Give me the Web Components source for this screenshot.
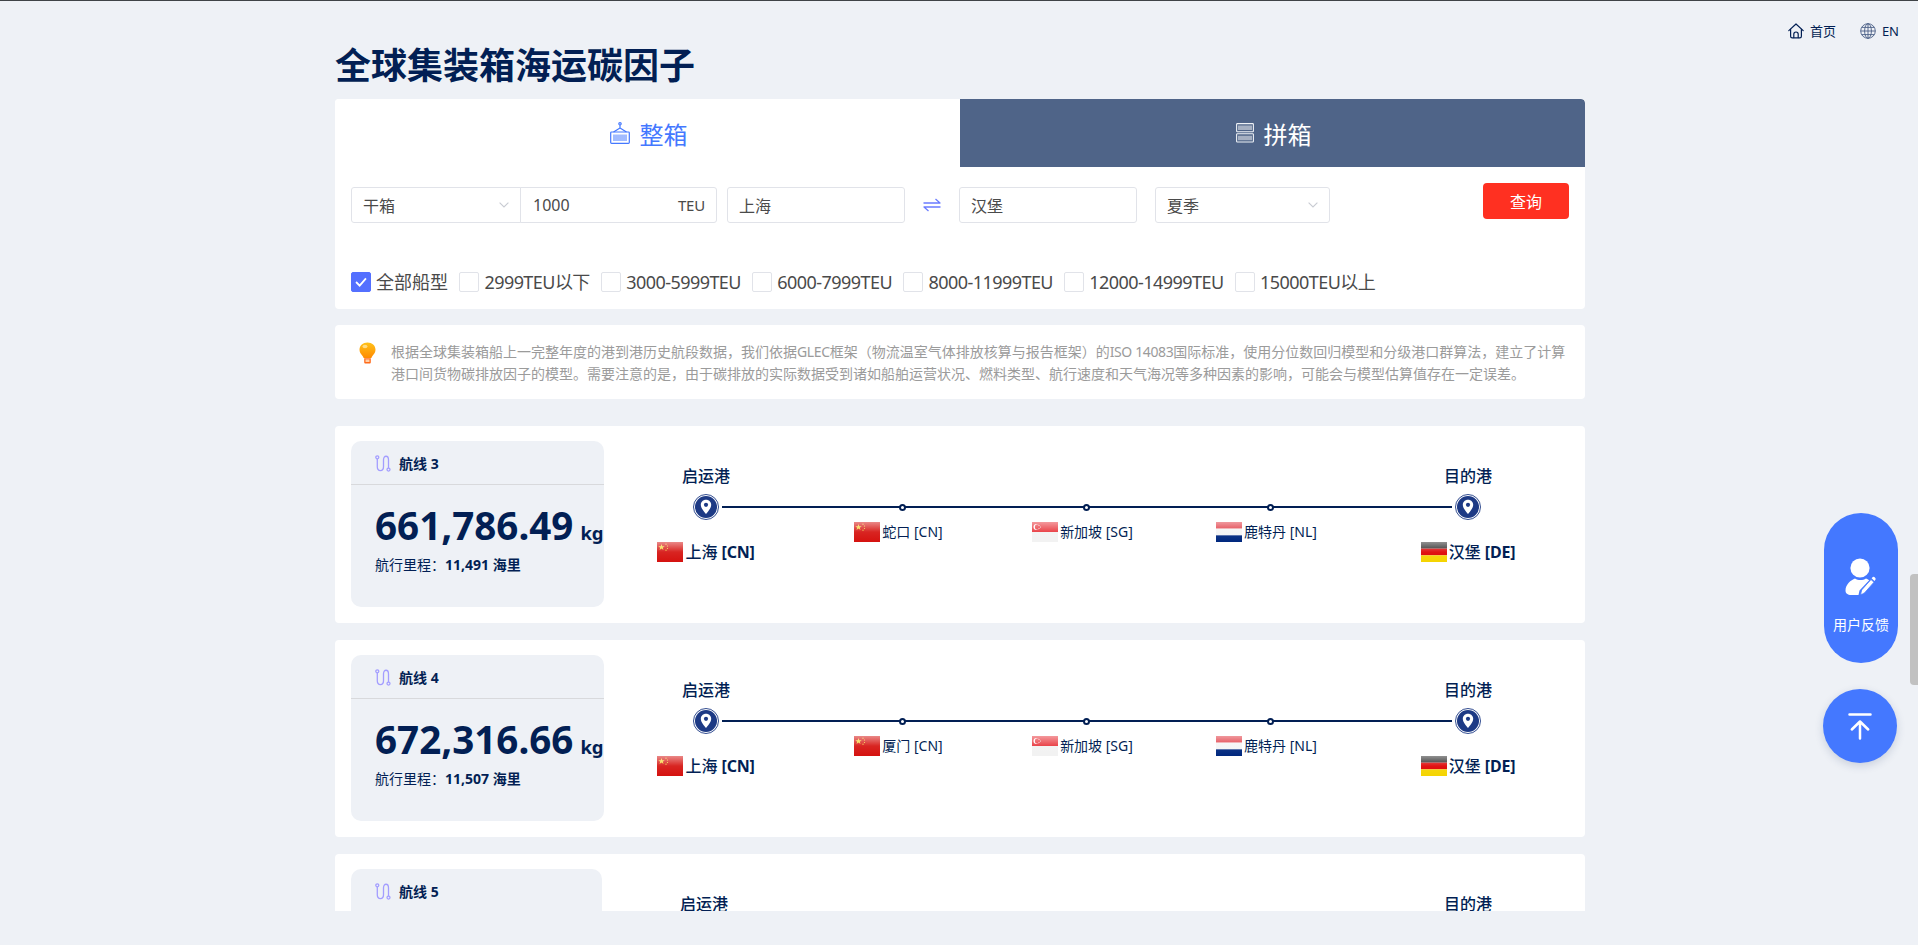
<!DOCTYPE html>
<html lang="zh">
<head>
<meta charset="utf-8">
<title>全球集装箱海运碳因子</title>
<style>
  html, body { margin: 0; height: 100%; }
  body {
    background: #eef1f6;
    color: #021f54;
    font-family: "Noto Sans", "Noto Sans CJK SC", sans-serif;
    overflow: hidden;
  }
  .latin { letter-spacing: -.38px; }
</style>
</head>
<body>
<carbon-page>
  <site-nav slot="nav"></site-nav>
  <page-heading>全球集装箱海运碳因子</page-heading>
  <search-panel></search-panel>
  <info-note>根据全球集装箱船上一完整年度的港到港历史航段数据，我们依据<span class="latin">GLEC</span>框架（物流温室气体排放核算与报告框架）的<span class="latin">ISO 14083</span>国际标准，使用分位数回归模型和分级港口群算法，建立了计算<br>港口间货物碳排放因子的模型。需要注意的是，由于碳排放的实际数据受到诸如船舶运营状况、燃料类型、航行速度和天气海况等多种因素的影响，可能会与模型估算值存在一定误差。</info-note>
  <route-card no="3" weight="661,786.49" distance="11,491">
    <route-port slot="origin" size="main" flag="cn" name="上海" code="CN"></route-port>
    <route-port slot="via" flag="cn" name="蛇口" code="CN"></route-port>
    <route-port slot="via" flag="sg" name="新加坡" code="SG"></route-port>
    <route-port slot="via" flag="nl" name="鹿特丹" code="NL"></route-port>
    <route-port slot="dest" size="main" flag="de" name="汉堡" code="DE"></route-port>
  </route-card>
  <route-card no="4" weight="672,316.66" distance="11,507">
    <route-port slot="origin" size="main" flag="cn" name="上海" code="CN"></route-port>
    <route-port slot="via" flag="cn" name="厦门" code="CN"></route-port>
    <route-port slot="via" flag="sg" name="新加坡" code="SG"></route-port>
    <route-port slot="via" flag="nl" name="鹿特丹" code="NL"></route-port>
    <route-port slot="dest" size="main" flag="de" name="汉堡" code="DE"></route-port>
  </route-card>
  <route-card no="5" narrow>
    <route-port slot="origin" size="main" flag="cn" name="上海" code="CN"></route-port>
    <route-port slot="dest" size="main" flag="de" name="汉堡" code="DE"></route-port>
  </route-card>
  <float-actions slot="float"></float-actions>
</carbon-page>

<script>
const NAVY = '#021f54';

class CarbonPage extends HTMLElement {
  constructor() {
    super();
    this.attachShadow({ mode: 'open' });
    this.shadowRoot.innerHTML = `
      <style>
        :host {
          display: block;
          height: 945px;
          position: relative;
          border-top: 1px solid #3f4347;
          box-sizing: border-box;
        }
        .viewport {
          height: 910px;
          overflow: hidden;
        }
        .content {
          width: 1250px;
          margin-left: 335px;
          display: flex;
          flex-direction: column;
        }
        .thumb {
          position: absolute;
          right: 0;
          top: 573px;
          width: 8px;
          height: 111px;
          background: #c1c1c1;
          border-radius: 4px 0 0 4px;
        }
      </style>
      <slot name="nav"></slot>
      <div class="viewport">
        <div class="content"><slot></slot></div>
      </div>
      <div class="thumb"></div>
      <slot name="float"></slot>
    `;
  }
}

class SiteNav extends HTMLElement {
  constructor() {
    super();
    this.attachShadow({ mode: 'open' });
    this.shadowRoot.innerHTML = `
      <style>
        :host {
          position: absolute;
          top: 20px;
          right: 19px;
          display: flex;
          align-items: center;
          gap: 24px;
          font-size: 13px;
          color: ${NAVY};
        }
        a { display: flex; align-items: center; gap: 6px; line-height: 20px; }
        svg { display: block; }
      </style>
      <a>
        <svg width="16" height="16" viewBox="0 0 16 16" fill="none" stroke="${NAVY}" stroke-width="1.2" stroke-linejoin="round" stroke-linecap="round">
          <path d="M.8 7.6 8 1l7.2 6.6"/>
          <path d="M2.6 6.4v6.8c0 1 .6 1.6 1.6 1.6h7.6c1 0 1.6-.6 1.6-1.6V6.4"/>
          <path d="M5.8 14.6v-3.4c0-1.2 1-2.2 2.2-2.2s2.2 1 2.2 2.2v3.4"/>
        </svg>
        <span>首页</span>
      </a>
      <a>
        <svg width="16" height="16" viewBox="0 0 16 16" fill="none" stroke="#4a5f86" stroke-width=".9">
          <circle cx="8" cy="8" r="7.3"/>
          <ellipse cx="8" cy="8" rx="3.4" ry="7.3"/>
          <path d="M8 .7v14.6M.7 8h14.6M1.7 4.4h12.6M1.7 11.6h12.6"/>
        </svg>
        <span>EN</span>
      </a>
    `;
  }
}

class PageHeading extends HTMLElement {
  constructor() {
    super();
    this.attachShadow({ mode: 'open' });
    this.shadowRoot.innerHTML = `
      <style>
        :host {
          display: block;
          padding-top: 45px;
          margin-bottom: 13px;
          font-size: 36px;
          line-height: 40px;
          font-weight: 700;
          color: ${NAVY};
          white-space: nowrap;
        }
      </style>
      <slot></slot>
    `;
  }
}

class SearchPanel extends HTMLElement {
  constructor() {
    super();
    this.attachShadow({ mode: 'open' });
    const chevron = `<svg class="chev" width="10" height="6" viewBox="0 0 10 6" fill="none" stroke="#c9ccd3" stroke-width="1.1"><path d="M.6.6 5 5 9.400.6"/></svg>`;
    const tiers = ['2999TEU以下', '3000-5999TEU', '6000-7999TEU', '8000-11999TEU', '12000-14999TEU', '15000TEU以上'];
    const bars = (y, h) => [3, 5, 7, 9, 11, 13, 15].map((x) => `M${x} ${y}v${h}`).join('');
    this.shadowRoot.innerHTML = `
      <style>
        :host {
          display: block;
          background: #fff;
          border-radius: 4px;
          height: 210px;
          color: #4a4a4a;
          overflow: hidden;
        }
        .tabs { display: flex; height: 68px; }
        .tab {
          flex: 1;
          display: flex;
          align-items: center;
          justify-content: center;
          gap: 10px;
          padding-left: 2px;
          font-size: 24px;
          color: #4478ff;
          background: #fff;
        }
        .tab.off { background: #4f6488; color: #fff; border-radius: 0 4px 0 0; }
        .tab svg { display: block; }
        .form {
          display: flex;
          align-items: flex-start;
          padding: 20px 16px 0;
          height: 36px;
        }
        .box {
          box-sizing: border-box;
          height: 36px;
          border: 1px solid #e1e3e9;
          border-radius: 3px;
          display: flex;
          align-items: center;
          justify-content: space-between;
          padding: 0 11px;
          font-size: 16px;
          background: #fff;
        }
        .chev { display: block; }
        .kind { width: 170px; border-radius: 3px 0 0 3px; }
        .qty { width: 197px; margin-left: -1px; border-radius: 0 3px 3px 0; padding: 0 11px 0 12px; }
        .qty small { font-size: 15px; letter-spacing: -.2px; }
        .city { width: 178px; }
        .from { margin-left: 10px; }
        .swap { margin: 0 18px; display: block; align-self: center; }
        .season { width: 175px; margin-left: 18px; }
        .go {
          margin-left: auto;
          margin-top: -4px;
          width: 86px;
          height: 36px;
          background: #ff3021;
          color: #fff;
          border-radius: 4px;
          font-size: 16px;
          display: flex;
          align-items: center;
          justify-content: center;
        }
        .tiers {
          display: flex;
          align-items: center;
          padding: 49px 16px 0;
          font-size: 18px;
          line-height: 20px;
          white-space: nowrap;
        }
        .tier { display: flex; align-items: center; gap: 5px; margin-right: 11.4px; letter-spacing: -.55px; }
        .tier.all { letter-spacing: 0; }
        .check {
          box-sizing: border-box;
          width: 20px;
          height: 20px;
          border: 1px solid #e1e3e9;
          border-radius: 2px;
          background: #fff;
          display: block;
        }
        .check.on { background: #5470ff; border-color: #5470ff; }
      </style>
      <div class="tabs">
        <div class="tab">
          <svg width="20" height="22" viewBox="0 0 20 22" fill="none" stroke="#4478ff" stroke-width="1.2">
            <circle cx="10" cy="1.800" r="1.200"/>
            <path d="M10 3v3M10 6 3.500 10M10 6l6.500 4"/>
            <rect x=".7" y="10" width="18.600" height="11.300" rx=".8"/>
            <path d="M4 12.500v6.500M6 12.500v6.500M8 12.500v6.500M10 12.500v6.500M12 12.500v6.500M14 12.500v6.500M16 12.500v6.500" stroke-width="1"/>
          </svg>
          <span>整箱</span>
        </div>
        <div class="tab off">
          <svg width="18" height="20" viewBox="0 0 18 20" fill="none" stroke="#eef1f6" stroke-width="1.100">
            <rect x=".6" y=".6" width="16.800" height="8.200" rx=".8"/>
            <rect x=".6" y="10.800" width="16.800" height="8.200" rx=".8"/>
            <path d="${bars(2.5, 4.5)}${bars(12.8, 4.5)}" stroke-width="1.200" stroke="#dfe3ea"/>
          </svg>
          <span>拼箱</span>
        </div>
      </div>
      <div class="form">
        <div class="box kind"><span>干箱</span>${chevron}</div>
        <div class="box qty"><span>1000</span><small>TEU</small></div>
        <div class="box city from"><span>上海</span></div>
        <svg class="swap" width="18" height="14" viewBox="0 0 18 14" fill="none" stroke="#6b7cff" stroke-width="1.300" stroke-linejoin="round">
          <path d="M.5 5h16.500L12.500 1M17.500 9H1l4.500 4"/>
        </svg>
        <div class="box city"><span>汉堡</span></div>
        <div class="box season"><span>夏季</span>${chevron}</div>
        <div class="go">查询</div>
      </div>
      <div class="tiers">
        <div class="tier all">
          <svg class="check on" viewBox="0 0 20 20" fill="none" stroke="#fff" stroke-width="2"><path d="M4.500 10l4 4 7-8"/></svg>
          <span>全部船型</span>
        </div>
        ${tiers.map((t) => `<div class="tier"><span class="check"></span><span>${t}</span></div>`).join('')}
      </div>
    `;
  }
}

class InfoNote extends HTMLElement {
  constructor() {
    super();
    this.attachShadow({ mode: 'open' });
    this.shadowRoot.innerHTML = `
      <style>
        :host {
          display: flex;
          align-items: flex-start;
          gap: 15px;
          box-sizing: border-box;
          height: 74px;
          margin: 16px 0 27px;
          padding: 16px 20px 0 24px;
          background: #fff;
          border-radius: 4px;
          font-size: 14px;
          line-height: 22px;
          color: #9b9b9b;
          white-space: nowrap;
        }
        svg { flex: none; display: block; margin-top: 1px; }
      </style>
      <svg width="17" height="22" viewBox="0 0 17 22">
        <defs>
          <linearGradient id="glow" x1="0" y1="0" x2="0" y2="1">
            <stop offset="0" stop-color="#ffc21a"/>
            <stop offset="1" stop-color="#ff8a00"/>
          </linearGradient>
        </defs>
        <path d="M8.500 .5C4 .5.5 3.600.5 7.700c0 2.700 1.400 4.300 2.700 5.700.7.800 1.200 1.500 1.400 2.600h7.800c.2-1.100.7-1.800 1.400-2.600 1.300-1.400 2.700-3 2.700-5.700C16.500 3.600 13 .5 8.500 .5z" fill="url(#glow)"/>
        <ellipse cx="6" cy="4.500" rx="2.500" ry="1.800" fill="#ffe9a8" opacity=".75"/>
        <path d="M5.200 16.200h6.600v4c0 .8-.6 1.300-1.300 1.300h-4c-.7 0-1.300-.5-1.300-1.300z" fill="#ff6a1a"/>
        <rect x="6.500" y="17.400" width="4" height="2.600" fill="#ffd0a8"/>
      </svg>
      <div><slot></slot></div>
    `;
  }
}

class FlagIcon extends HTMLElement {
  static get bands() {
    return {
      cn: ['#d5120f'],
      sg: ['#e8333a', '#f2f2f2'],
      nl: ['#e0323c', '#f4f4f4', '#00287e'],
      de: ['#222', '#dd0000', '#f5d400'],
    };
  }

  constructor() {
    super();
    this.attachShadow({ mode: 'open' });
  }

  connectedCallback() {
    const code = this.getAttribute('code');
    const bands = FlagIcon.bands[code] || ['#ccc'];
    const h = 20 / bands.length;
    const rects = bands.map((c, i) => `<rect x="0" y="${i * h}" width="26" height="${h}" fill="${c}"/>`).join('');
    let mark = '';
    if (code === 'cn') {
      mark = `<path d="M4.500 2l.8 2.300H7.700L5.800 5.700l.7 2.300-2-1.400-2 1.400.7-2.300L1.300 4.300h2.400z" fill="#f7d93c"/>
        <circle cx="9" cy="2.200" r=".6" fill="#f7d93c"/><circle cx="10.500" cy="4" r=".6" fill="#f7d93c"/>
        <circle cx="10.500" cy="6.500" r=".6" fill="#f7d93c"/><circle cx="9" cy="8.200" r=".6" fill="#f7d93c"/>`;
    } else if (code === 'sg') {
      mark = `<circle cx="4.500" cy="5" r="3" fill="#fff"/><circle cx="5.700" cy="5" r="2.800" fill="#e8333a"/>
        <circle cx="7" cy="3.500" r=".5" fill="#fff"/><circle cx="8.500" cy="5" r=".5" fill="#fff"/><circle cx="7" cy="6.500" r=".5" fill="#fff"/>`;
    }
    this.shadowRoot.innerHTML = `
      <style>
        :host { display: block; width: 26px; height: 20px; flex: none; }
        svg { display: block; }
      </style>
      <svg width="26" height="20" viewBox="0 0 26 20">
        <defs>
          <linearGradient id="gloss" x1="0" y1="0" x2="0" y2="1">
            <stop offset="0" stop-color="#fff" stop-opacity=".5"/>
            <stop offset=".5" stop-color="#fff" stop-opacity=".08"/>
            <stop offset="1" stop-color="#fff" stop-opacity="0"/>
          </linearGradient>
        </defs>
        ${rects}${mark}
        <rect width="26" height="20" fill="url(#gloss)"/>
      </svg>
    `;
  }
}

class RoutePort extends HTMLElement {
  connectedCallback() {
    if (this.shadowRoot) return;
    this.attachShadow({ mode: 'open' });
    const main = this.getAttribute('size') === 'main';
    const name = this.getAttribute('name');
    const code = this.getAttribute('code');
    const flag = this.getAttribute('flag');
    const node = main
      ? `<svg class="node" width="26" height="26" viewBox="0 0 26 26">
           <circle cx="13" cy="13" r="12.500" fill="#fff" stroke="#1d3a85" stroke-width=".9"/>
           <circle cx="13" cy="13" r="11" fill="#1d3a85"/>
           <path d="M13 5.800c-3 0-5.200 2.200-5.200 5 0 3.500 3.800 7.400 5.200 9.200 1.400-1.800 5.200-5.700 5.200-9.200 0-2.800-2.200-5-5.200-5z" fill="#fff"/>
           <circle cx="13" cy="10.800" r="2.100" fill="#1d3a85"/>
         </svg>`
      : `<span class="dot"></span>`;
    this.shadowRoot.innerHTML = `
      <style>
        :host {
          display: flex;
          flex-direction: column;
          align-items: center;
          position: relative;
          white-space: nowrap;
        }
        .head {
          height: 24px;
          line-height: 24px;
          font-size: 16px;
          font-weight: 500;
          margin-bottom: 6px;
        }
        .spot {
          height: 26px;
          display: flex;
          align-items: center;
          justify-content: center;
        }
        .node { display: block; }
        .dot {
          box-sizing: border-box;
          width: 7px;
          height: 7px;
          border-radius: 50%;
          border: 2px solid ${NAVY};
          background: #fff;
        }
        .port {
          display: flex;
          align-items: center;
          gap: 2px;
          line-height: 20px;
          font-size: 14px;
          margin-top: 2px;
          margin-left: -7px;
        }
        .port.main {
          font-size: 16px;
          font-weight: 500;
          margin-top: 22px;
          margin-left: 0;
        }
        .code { font-weight: 400; }
        .main .code { font-weight: 700; letter-spacing: -.2px; }
      </style>
      ${main ? `<div class="head">${this.getAttribute('slot') === 'origin' ? '启运港' : '目的港'}</div>` : `<div class="head"></div>`}
      <div class="spot">${node}</div>
      <div class="port ${main ? 'main' : ''}">
        <flag-icon code="${flag}"></flag-icon>
        <span>${name} <span class="code">[${code}]</span></span>
      </div>
    `;
  }
}

class RouteCard extends HTMLElement {
  connectedCallback() {
    if (this.shadowRoot) return;
    this.attachShadow({ mode: 'open' });
    const no = this.getAttribute('no');
    const weight = this.getAttribute('weight');
    const distance = this.getAttribute('distance');
    const narrow = this.hasAttribute('narrow');
    this.shadowRoot.innerHTML = `
      <style>
        :host {
          display: flex;
          box-sizing: border-box;
          height: 197px;
          margin-bottom: 17px;
          padding: 15px 0 16px 16px;
          background: #fff;
          border-radius: 4px;
          flex: none;
        }
        .panel {
          flex: none;
          width: ${narrow ? 251 : 253}px;
          box-sizing: border-box;
          background: #eef1f6;
          border-radius: 10px;
        }
        .title {
          height: 44px;
          box-sizing: border-box;
          border-bottom: 1px solid #d8d9dc;
          padding: 14px 0 0 24px;
          display: flex;
          align-items: flex-start;
          gap: 8px;
          font-size: 14px;
          line-height: 18px;
          font-weight: 700;
        }
        .title svg { display: block; }
        .amount {
          padding: 14px 0 0 24px;
          white-space: nowrap;
          font-weight: 700;
          font-size: 38.6px;
          line-height: 52px;
        }
        .amount small { font-size: 18.5px; line-height: 0; margin-left: 7px; }
        .miles {
          padding: 4px 0 0 24px;
          font-size: 14px;
          line-height: 20px;
        }
        .miles b { font-weight: 700; }
        .track {
          flex: 1;
          display: flex;
          justify-content: space-between;
          position: relative;
          padding: 23px 49px 0 34px;
        }
        .line {
          position: absolute;
          top: 65px;
          left: 118px;
          right: 133px;
          height: 2px;
          background: ${NAVY};
        }
        .end { width: 136px; display: flex; justify-content: center; position: relative; }
        .via {
          width: 552px;
          margin-left: -2px;
          display: grid;
          grid-template-columns: repeat(3, 1fr);
          position: relative;
        }
      </style>
      <div class="panel">
        <div class="title">
          <svg width="16" height="17" viewBox="0 0 16 17" fill="none" stroke="#a39dff" stroke-width="1.300">
            <circle cx="2.300" cy="2.300" r="1.500"/>
            <path d="M2.300 3.800v8c0 5 6.200 5 6.200 0V5c0-5 5-5 5 0v8"/>
            <circle cx="13.500" cy="14.600" r="1.500"/>
          </svg>
          <span>航线 ${no}</span>
        </div>
        ${weight ? `<div class="amount">${weight}<small>kg</small></div>
        <div class="miles">航行里程：<b>${distance} 海里</b></div>` : ''}
      </div>
      <div class="track">
        <div class="line"></div>
        <div class="end"><slot name="origin"></slot></div>
        <div class="via"><slot name="via"></slot></div>
        <div class="end"><slot name="dest"></slot></div>
      </div>
    `;
  }
}

class FloatActions extends HTMLElement {
  constructor() {
    super();
    this.attachShadow({ mode: 'open' });
    this.shadowRoot.innerHTML = `
      <style>
        :host {
          position: absolute;
          top: 512px;
          right: 20px;
          width: 75px;
          display: flex;
          flex-direction: column;
          align-items: flex-start;
          gap: 26px;
          color: #fff;
        }
        .pill {
          width: 74px;
          height: 150px;
          box-sizing: border-box;
          padding-top: 45px;
          margin-left: 1px;
          border-radius: 37px;
          background: #4478ff;
          display: flex;
          flex-direction: column;
          align-items: center;
          gap: 20px;
          font-size: 14px;
          line-height: 20px;
          white-space: nowrap;
        }
        .top {
          width: 74px;
          height: 74px;
          border-radius: 50%;
          background: #4478ff;
          box-shadow: 0 3px 8px rgba(40, 60, 110, .18);
          display: flex;
          align-items: center;
          justify-content: center;
        }
        svg { display: block; }
      </style>
      <div class="pill">
        <svg width="32" height="37" viewBox="0 0 32 37">
          <circle cx="15" cy="10" r="9.600" fill="#fff"/>
          <path d="M.5 32.500c0-6 5.500-10.500 9.500-12 3 2 8 2 11 0 1 .4 2.200 1 3.200 1.800L14.500 32.500 13.500 37H6C2.700 37 .5 35.300.5 32.500z" fill="#fff"/>
          <path d="M15.500 36.500l1.200-4.600L26 21.500l3 2.700-9.300 10.500c-1.300 1-2.600 1.500-4.200 1.800z" fill="#fff" stroke="#4478ff" stroke-width=".8"/>
          <path d="M27.300 19.500c.7-.8 1.700-.9 2.600-.1s1 1.900.3 2.700l-.7.800-2.900-2.600z" fill="#fff"/>
        </svg>
        <span>用户反馈</span>
      </div>
      <div class="top">
        <svg width="24" height="27" viewBox="0 0 24 27" fill="none" stroke="#fff" stroke-width="2.500" stroke-linecap="round" stroke-linejoin="round">
          <path d="M1.500 1.500h21M12 25.500V8.500M3.800 16.500 12 8.500l8.200 8"/>
        </svg>
      </div>
    `;
  }
}

customElements.define('carbon-page', CarbonPage);
customElements.define('site-nav', SiteNav);
customElements.define('page-heading', PageHeading);
customElements.define('search-panel', SearchPanel);
customElements.define('info-note', InfoNote);
customElements.define('flag-icon', FlagIcon);
customElements.define('route-port', RoutePort);
customElements.define('route-card', RouteCard);
customElements.define('float-actions', FloatActions);
</script>
</body>
</html>
